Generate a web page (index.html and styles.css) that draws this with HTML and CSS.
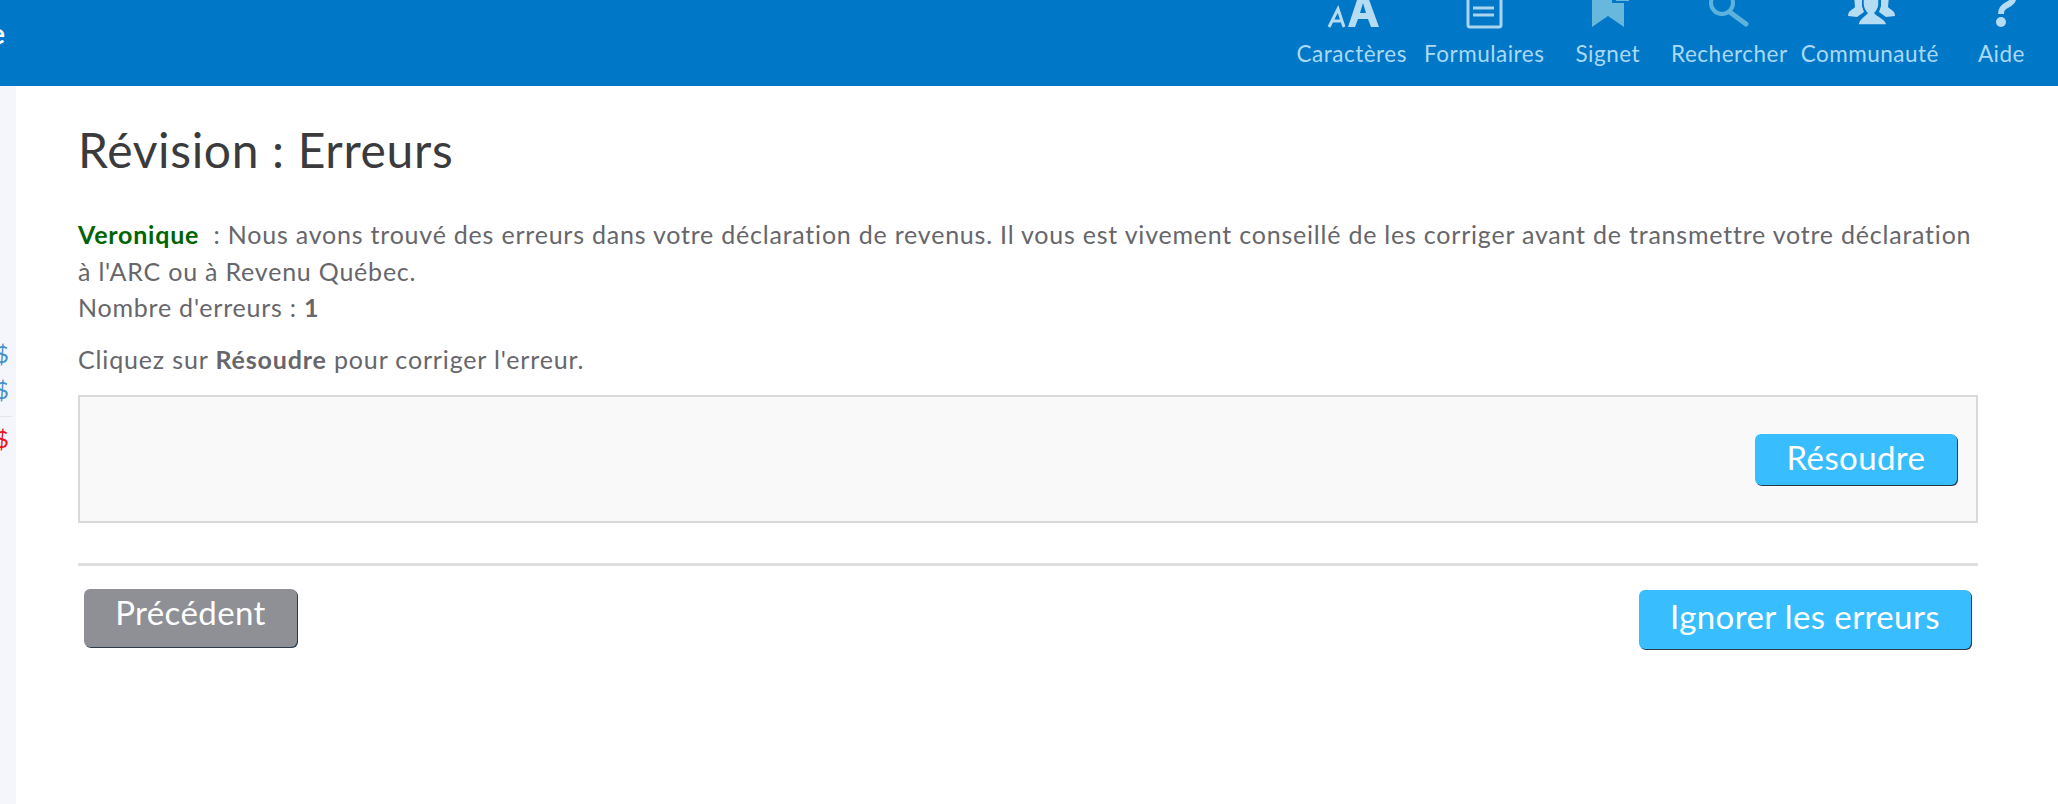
FILE: index.html
```html
<!DOCTYPE html>
<html lang="fr">
<head>
<meta charset="utf-8">
<title>Révision : Erreurs</title>
<link rel="stylesheet" href="styles.css">
</head>
<body>
<header class="topbar">
  <div class="brand"><span class="brand-text">e</span></div>
  <nav class="tools">
    <a class="tool tool-chars">
      <svg class="tool-icon" viewBox="7 0 46 29"><path fill="#b5dcf2" fill-rule="evenodd" d="M26 27 37 -6h8l12 33h-8l-3-8H36l-3 8zM38 13h6l-3-10z"/><path fill="none" stroke="#b5dcf2" stroke-width="3" d="M7 27 16 9l6 18M11 21h10"/></svg>
      <span class="tool-label">Caractères</span>
    </a>
    <a class="tool tool-forms">
      <svg class="tool-icon" viewBox="7 0 46 29"><g fill="none" stroke="#a9d5ef"><rect x="14" y="-8" width="33" height="35" rx="2" stroke-width="3"/><path d="M19 8h21M19 15h21" stroke-width="3"/></g></svg>
      <span class="tool-label">Formulaires</span>
    </a>
    <a class="tool tool-mark">
      <svg class="tool-icon" viewBox="7 0 46 29"><path fill="#68b7dc" d="M14 -6h32v33L30 16 14 27z"/><path fill="#0177c7" d="M34 -2h18v5H34z"/><path fill="#68b7dc" d="M38 -2h13v3H38z"/></svg>
      <span class="tool-label">Signet</span>
    </a>
    <a class="tool tool-search">
      <svg class="tool-icon" viewBox="7 0 46 29"><g fill="none" stroke="#5db3dc"><circle cx="23" cy="3" r="11" stroke-width="4"/><path d="M32 13l15 11" stroke-width="5" stroke-linecap="round"/></g></svg>
      <span class="tool-label">Rechercher</span>
    </a>
    <a class="tool tool-people">
      <svg class="tool-icon" viewBox="7 0 46 29"><g fill="#b5dcf2"><path d="M8 16C8 10 13 10 15 7L14 -4h8V6l2 6-7 5z"/><path d="M55 16C55 10 50 10 48 7L49 -4h-8V6l-2 6 7 5z"/><path stroke="#0177c7" stroke-width="1.500" d="M18 25C18 18 24 17 27 13 25 11 23 8 23 4V-4H39V4C39 8 37 11 35 13 38 17 46 18 47 25z"/></g></svg>
      <span class="tool-label">Communauté</span>
    </a>
    <a class="tool tool-help">
      <svg class="tool-icon" viewBox="7 0 46 29"><path fill="none" stroke="#b5dcf2" stroke-width="6" d="M36 -8C46 -2 42 2 36 5 32 7 30 9 30 14"/><circle fill="#b5dcf2" cx="30" cy="22" r="5"/></svg>
      <span class="tool-label">Aide</span>
    </a>
  </nav>
</header>
<div class="page">
  <aside class="rail">
    <div class="rail-amt rail-first">$</div>
    <div class="rail-amt">$</div>
    <div class="rail-amt rail-total">$</div>
  </aside>
  <main class="content">
    <h1 class="title">Révision : Erreurs</h1>
    <p class="intro"><strong class="user">Veronique</strong>&nbsp; : Nous avons trouvé des erreurs dans votre déclaration de revenus. Il vous est vivement conseillé de les corriger avant de transmettre votre déclaration à l'ARC ou à Revenu Québec.<br>Nombre d'erreurs : <strong>1</strong></p>
    <p class="hint">Cliquez sur <strong>Résoudre</strong> pour corriger l'erreur.</p>
    <section class="panel">
      <button class="btn btn-solve">Résoudre</button>
    </section>
    <hr class="divider">
    <div class="actions">
      <button class="btn btn-back">Précédent</button>
      <button class="btn btn-skip">Ignorer les erreurs</button>
    </div>
  </main>
</div>
</body>
</html>
```
FILE: styles.css
```css
* { box-sizing: border-box; }
html, body { margin: 0; height: 100%; overflow: hidden; }
body { font-family: Lato, "Open Sans", sans-serif; background: #fff; color: #66666b; display: flex; flex-direction: column; }
.topbar { height: 86px; flex: none; background: #0177c7; display: flex; justify-content: space-between; overflow: hidden; }
.brand { width: 5px; overflow: hidden; display: flex; justify-content: flex-end; padding-top: 16px; }
.brand-text { color: #fff; font-size: 28px; font-weight: 700; line-height: 34px; }
.tools { display: flex; padding-right: 33px; }
.tool { display: flex; flex-direction: column; align-items: center; color: #a9daf5; font-size: 22.500px; letter-spacing: 0.500px; line-height: 26px; white-space: nowrap; }
.tool-icon { width: 46px; height: 29px; margin-bottom: 12px; flex: none; overflow: visible; }
.tool-label { display: block; }
.tool-forms { margin-left: 17px; }
.tool-mark { margin-left: 31px; }
.tool-search { margin-left: 31px; }
.tool-people { margin-left: 13px; }
.tool-help { margin-left: 39px; }
.page { flex: 1; display: flex; min-height: 0; }
.rail { width: 16px; flex: none; background: #f5f6fb; font-size: 24px; line-height: 36px; overflow: hidden; }
.rail-amt { display: flex; justify-content: flex-end; padding-right: 7px; color: #4a90c8; }
.rail-first { margin-top: 250px; }
.rail-total { color: #e8141c; border-top: 1px solid #e3e5ea; margin-top: 8px; width: 12px; padding-right: 3px; padding-top: 4px; }
.content { flex: 1; padding: 36px 80px 0 62px; }
.title { margin: 0; font-size: 48px; font-weight: 400; letter-spacing: 0.650px; line-height: 56px; color: #3b3b3d; }
.intro { margin: 38px 0 0; font-size: 25px; letter-spacing: 0.785px; line-height: 36.500px; }
.user { color: #006400; }
.hint { margin: 15px 0 0; font-size: 25px; letter-spacing: 0.850px; line-height: 36px; }
.panel { margin-top: 18.500px; height: 128px; border: 2px solid #d9d9d9; background: #f9f9f9; display: flex; justify-content: flex-end; padding: 37px 19px 0 0; }
.btn { border: 0; border-radius: 6px; color: #fff; font-family: inherit; font-size: 33px; letter-spacing: 0.400px; box-shadow: 1px 1px 0 #2a3a4a; padding: 0; }
.btn-solve { width: 202px; height: 51px; background: #38bdff; padding-bottom: 5px; }
.divider { margin: 40px 0 0; border: 0; height: 3px; background: #dedede; }
.actions { margin-top: 23px; padding: 0 7px 0 6px; display: flex; justify-content: space-between; align-items: flex-start; }
.btn-back { width: 213px; height: 58px; background: #8e9096; padding-bottom: 12px; }
.btn-skip { width: 332px; height: 59px; background: #38bdff; margin-top: 1px; padding-bottom: 8px; }
```
